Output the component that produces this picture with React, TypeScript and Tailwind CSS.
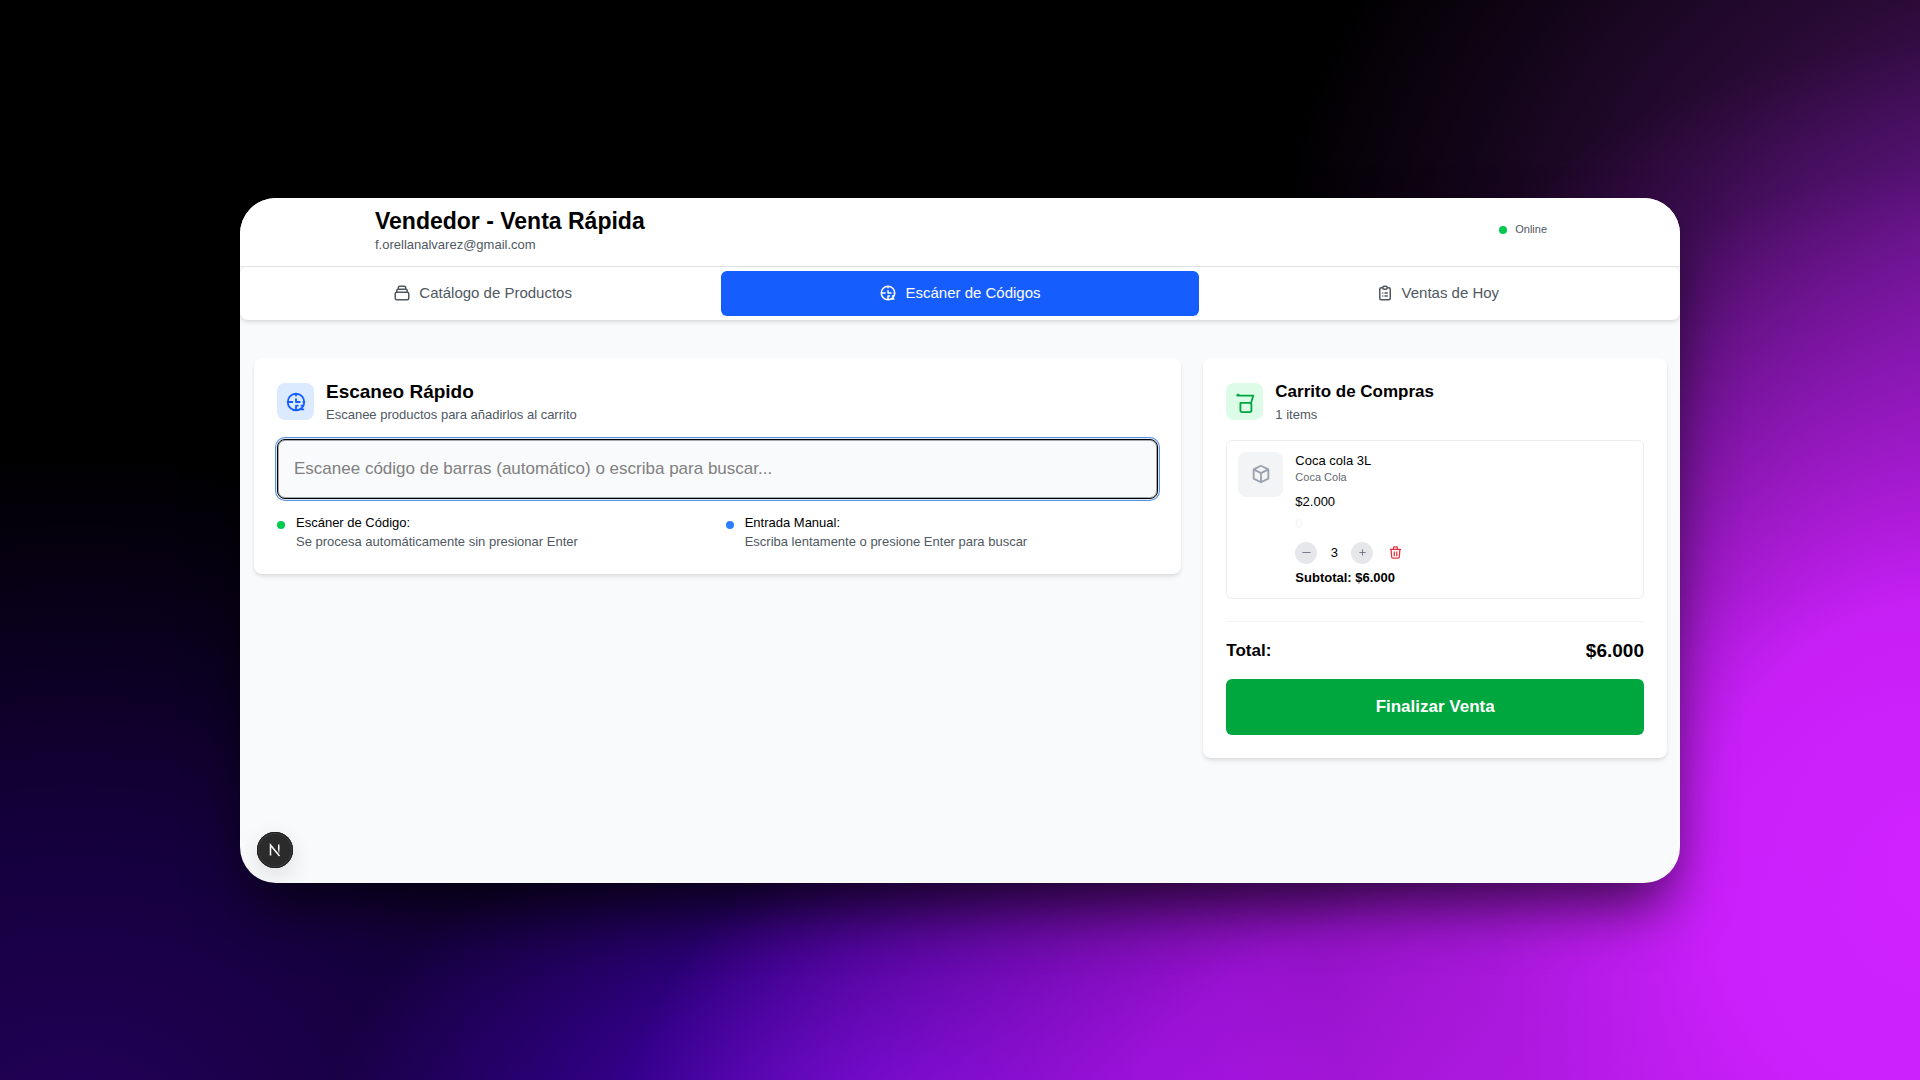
import type { ReactNode } from "react";

const ICONS = {
  catalog:
    "M19 11H5m14 0a2 2 0 012 2v6a2 2 0 01-2 2H5a2 2 0 01-2-2v-6a2 2 0 012-2m14 0V9a2 2 0 00-2-2M5 11V9a2 2 0 012-2m0 0V5a2 2 0 012-2h6a2 2 0 012 2v2M7 7h10",
  scanner:
    "M12 4v1m6 11h2m-6 0h-2v4m0-11v3m0 0h.01M12 12h4.01M16 20h4M4 12h4m12 0h.01M21 12a9 9 0 11-18 0 9 9 0 0118 0z",
  clipboard:
    "M9 5H7a2 2 0 00-2 2v12a2 2 0 002 2h10a2 2 0 002-2V7a2 2 0 00-2-2h-2M9 5a2 2 0 002 2h2a2 2 0 002-2M9 5a2 2 0 012-2h2a2 2 0 012 2m-3 7h3m-3 4h3m-6-4h.01M9 16h.01",
  cart: "M4 4h1M3.500 5H21l-2.400 8M9 13h8a2 2 0 012 2v6a2 2 0 01-2 2H9a2 2 0 01-2-2V13z",
  box: "M20 7l-8-4-8 4m16 0l-8 4m8-4v10l-8 4m0-10L4 7m8 4v10M4 7v10l8 4",
  trash:
    "M19 7l-.867 12.142A2 2 0 0116.138 21H7.862a2 2 0 01-1.995-1.858L5 7m5 4v6m4-6v6m1-10V4a1 1 0 00-1-1h-4a1 1 0 00-1 1v3M4 7h16",
  minus: "M4 12h16",
  plus: "M12 6v12M6 12h12",
};

function Icon({ name, className }: { name: keyof typeof ICONS; className: string }) {
  return (
    <svg viewBox="0 0 24 24" fill="none" stroke="currentColor" strokeWidth={2} strokeLinecap="round" strokeLinejoin="round" className={className} aria-hidden="true">
      <path d={ICONS[name]} />
    </svg>
  );
}

function Tab({ icon, label, active = false }: { icon: keyof typeof ICONS; label: string; active?: boolean }) {
  return (
    <button
      type="button"
      className={
        active
          ? "flex h-[45px] flex-1 items-center justify-center gap-2 rounded-md bg-[#155dfc] text-[15px] text-white"
          : "flex h-[45px] flex-1 items-center justify-center gap-2 rounded-md text-[15px] text-[#4f585f]"
      }
    >
      <Icon name={icon} className="size-[18px]" />
      {label}
    </button>
  );
}

function CardHeader({ icon, tone, title, titleSize, subtitle }: { icon: keyof typeof ICONS; tone: string; title: string; titleSize: string; subtitle: string }) {
  return (
    <div className="flex items-center gap-3">
      <div className={"flex size-[37px] shrink-0 items-center justify-center rounded-lg " + tone}>
        <Icon name={icon} className="size-[22px]" />
      </div>
      <div>
        <h2 className={"leading-[26px] font-bold " + titleSize}>{title}</h2>
        <p className="text-[13px] leading-5 text-[#4f585f]">{subtitle}</p>
      </div>
    </div>
  );
}

function Hint({ dot, title, text }: { dot: string; title: string; text: string }) {
  return (
    <div className="flex gap-[11px]">
      <span className={"mt-2 size-2 shrink-0 rounded-full " + dot} />
      <div className="text-[13px] leading-[19px]">
        <p>{title}</p>
        <p className="text-[#4f585f]">{text}</p>
      </div>
    </div>
  );
}

function Card({ children }: { children: ReactNode }) {
  return <section className="rounded-lg bg-white px-[23px] pt-[21px] pb-[23px] shadow-[0_3px_5px_-1px_rgba(0,0,0,0.12),0_1px_3px_rgba(0,0,0,0.04)]">{children}</section>;
}

export default function App() {
  return (
    <div className="flex min-h-screen items-center bg-black bg-[radial-gradient(ellipse_38%_76%_at_101%_80%,#d022ff_0%,rgba(204,32,252,0.96)_32%,rgba(170,26,220,0.62)_62%,rgba(130,20,180,0.2)_85%,rgba(120,20,170,0)_100%),radial-gradient(ellipse_52%_54%_at_84%_108%,#c41cf6_0%,rgba(170,20,228,0.88)_50%,rgba(100,10,200,0)_100%),radial-gradient(ellipse_30%_36%_at_47%_106%,#5a06d0_0%,rgba(70,0,190,0.65)_50%,rgba(40,0,120,0)_100%),radial-gradient(ellipse_48%_62%_at_4%_104%,#220058_0%,rgba(25,0,74,0.8)_45%,rgba(0,0,0,0)_100%),radial-gradient(ellipse_42%_62%_at_108%_28%,#6a1890_0%,rgba(64,16,84,0.65)_50%,rgba(0,0,0,0)_100%)] px-[12.5%] font-['Liberation_Sans',Arial,sans-serif] text-black">
      <div className="relative w-full overflow-hidden rounded-[36px] bg-[#f9fafb] pb-[125px] shadow-[0_30px_60px_-10px_rgba(0,0,0,0.7)]">
        <header className="flex items-center justify-between border-b border-gray-200 bg-white pt-2 pr-[133px] pb-3 pl-[135px]">
          <div>
            <h1 className="text-[23px] leading-[30px] font-bold">Vendedor - Venta Rápida</h1>
            <p className="text-[13px] leading-[18px] text-[#4f585f]">f.orellanalvarez@gmail.com</p>
          </div>
          <div className="flex items-center gap-2 text-[11px] text-[#4f585f]">
            <span className="size-2 rounded-full bg-[#00c950]" />
            Online
          </div>
        </header>

        <nav className="flex rounded-lg bg-white p-1 shadow-[0_2px_4px_rgba(0,0,0,0.14)]">
          <Tab icon="catalog" label="Catálogo de Productos" />
          <Tab icon="scanner" label="Escáner de Códigos" active />
          <Tab icon="clipboard" label="Ventas de Hoy" />
        </nav>

        <main className="grid grid-cols-[2fr_1fr] items-start gap-[22px] pt-[38px] pr-[13px] pl-[14px]">
          <Card>
            <CardHeader icon="scanner" tone="bg-[#dbeafe] text-[#155dfc]" title="Escaneo Rápido" titleSize="text-[19px]" subtitle="Escanee productos para añadirlos al carrito" />
            <input
              type="text"
              aria-label="Código de barras"
              placeholder="Escanee código de barras (automático) o escriba para buscar..."
              className="mt-[14px] block h-[60px] w-full rounded-lg border border-black bg-[#f9fafb] px-4 text-[17px] shadow-[0_0_0_1px_#dbe8fa,0_0_0_2px_#5b93e0,inset_0_0_0_1px_#a5a8ac] outline-none placeholder:text-[#808080]"
            />
            <div className="mt-[14px] grid grid-cols-2 gap-4">
              <Hint dot="bg-[#00c950]" title="Escáner de Código:" text="Se procesa automáticamente sin presionar Enter" />
              <Hint dot="bg-[#2b7fff]" title="Entrada Manual:" text="Escriba lentamente o presione Enter para buscar" />
            </div>
          </Card>

          <Card>
            <CardHeader icon="cart" tone="bg-[#dcfce7] text-[#00a63e]" title="Carrito de Compras" titleSize="text-[17px]" subtitle="1 items" />
            <div className="mt-[15px] flex gap-3 rounded-md border border-[#ebedf0] p-[11px]">
              <div className="flex size-[45px] shrink-0 items-center justify-center rounded-lg bg-[#f3f4f6] text-[#99a1af]">
                <Icon name="box" className="size-[22px]" />
              </div>
              <div className="text-[13px] leading-[19px]">
                <h3 className="leading-[17px]">Coca cola 3L</h3>
                <p className="text-[11px] leading-4 text-[#5f676e]">Coca Cola</p>
                <p className="mt-[7px]">$2.000</p>
                <p className="mt-[3px] text-[#f3f4f6]">0</p>
                <div className="mt-[9px] flex items-center">
                  <button type="button" aria-label="Quitar uno" className="flex size-[22px] items-center justify-center rounded-full bg-gray-200 text-[#6a7282]">
                    <Icon name="minus" className="size-[11px]" />
                  </button>
                  <span className="w-[34px] text-center">3</span>
                  <button type="button" aria-label="Agregar uno" className="flex size-[22px] items-center justify-center rounded-full bg-gray-200 text-[#6a7282]">
                    <Icon name="plus" className="size-[11px]" />
                  </button>
                  <button type="button" aria-label="Eliminar producto" className="ml-[15px] text-[#e7303f]">
                    <Icon name="trash" className="size-[15px]" />
                  </button>
                </div>
                <p className="mt-1 font-bold">Subtotal: $6.000</p>
              </div>
            </div>
            <div className="mt-[22px] border-t border-gray-100 pt-4">
              <div className="flex items-center justify-between leading-[26px] font-bold">
                <span className="text-[17px]">Total:</span>
                <span className="text-[19px]">$6.000</span>
              </div>
              <button type="button" className="mt-[15px] h-14 w-full rounded-md bg-[#00a63e] text-[17px] font-bold text-white">
                Finalizar Venta
              </button>
            </div>
          </Card>
        </main>

        <button
          type="button"
          aria-label="Herramientas de desarrollo"
          className="absolute bottom-[15px] left-[17px] flex size-9 items-center justify-center rounded-full bg-[#2b2b2b] text-white shadow-[inset_0_0_0_1px_#202020,inset_0_0_0_2px_#3c3c3c,0_8px_24px_rgba(0,0,0,0.12)]"
        >
          <svg viewBox="0 0 14 14" className="size-[14px]" fill="none" aria-hidden="true">
            <defs>
              <linearGradient id="fade" x1="0" y1="0" x2="0" y2="1">
                <stop offset="0.5" stopColor="#fff" />
                <stop offset="1" stopColor="#fff" stopOpacity="0.2" />
              </linearGradient>
            </defs>
            <path d="M2.500 12.500V2L11.500 13" stroke="#fff" strokeWidth="1.500" />
            <rect x="10" y="1.500" width="1.500" height="9" fill="url(#fade)" />
          </svg>
        </button>
      </div>
    </div>
  );
}
